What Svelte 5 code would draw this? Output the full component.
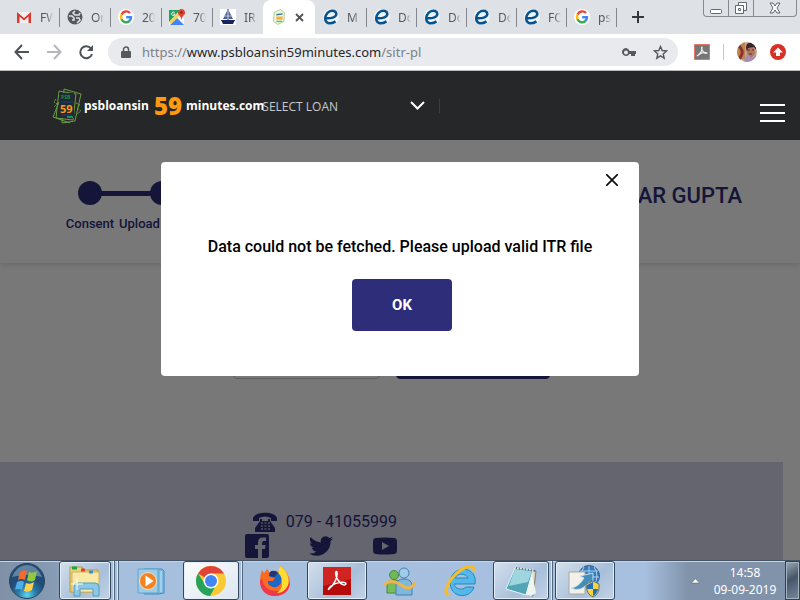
<script>
  const tabs = [
    { icon: 'gmail', title: 'FW' },
    { icon: 'globe', title: 'Or' },
    { icon: 'google', title: '20' },
    { icon: 'maps', title: '70' },
    { icon: 'ship', title: 'IRI' },
    { icon: 'psb', title: '', active: true },
    { icon: 'e', title: 'M' },
    { icon: 'e', title: 'Do' },
    { icon: 'e', title: 'Do' },
    { icon: 'e', title: 'Do' },
    { icon: 'e', title: 'FO' },
    { icon: 'google', title: 'ps' }
  ];
  const tasks = [
    { icon: 'explorer', name: 'Explorer', open: true, stack: 2 },
    { icon: 'media', name: 'Media Player' },
    { icon: 'chrome', name: 'Chrome', open: true, stack: 1, lit: true },
    { icon: 'firefox', name: 'Firefox' },
    { icon: 'acrobat', name: 'Acrobat', open: true },
    { icon: 'messenger', name: 'Messenger' },
    { icon: 'ie', name: 'Internet Explorer' },
    { icon: 'notepad', name: 'Notepad', open: true, stack: 1 },
    { icon: 'network', name: 'Network', open: true }
  ];
  let address = $state('https://www.psbloansin59minutes.com/sitr-pl');
</script>

{#snippet psbLogo()}
  <g fill="none" stroke="#6b9f43" stroke-width="1">
    <path d="M7 3l17 3-3 26-17-2z" />
    <path d="M12 1l17 5-6 27-13 2z" />
    <path d="M1 29l6-15M1 29l17 6" />
    <path d="M24 15l4 2-3 3 4 3-4 3M4 11l-2 3 3 2-3 3" stroke-dasharray="2 1" />
  </g>
  <path d="M7 5h15v25H7z" fill="#202a35" />
  <path d="M9 14h12M9 27h11" stroke="#27377b" />
  <path d="M15 29h6" stroke="#179653" stroke-width="2" />
{/snippet}

{#snippet favicon(name)}
  <svg width="16" height="16" viewBox="0 0 16 16" aria-hidden="true">
    {#if name === 'gmail'}
      <path d="M1 3h14v11H1z" fill="#f1f1f1" />
      <path d="M1 14V3l7 6 7-6v11h-2.500V7.500L8 11.500 3.500 7.500V14z" fill="#d9382c" />
    {:else if name === 'globe'}
      <circle cx="8" cy="8" r="7.500" fill="#55595e" />
      <path d="M2 7h3l2 2v2H5M8 2L6 4l2 2h4l1-2M9 9h3l1 2-3 3" fill="none" stroke="#dee1e6" stroke-width="1.600" />
    {:else if name === 'google'}
      <circle cx="8" cy="8" r="8" fill="#fff" />
      <g fill="none" stroke-width="2.400">
        <path d="M12 4A5 5 0 0 0 3.600 5.700" stroke="#ea4335" />
        <path d="M3.600 5.500a5 5 0 0 0 0 5" stroke="#fbbc05" />
        <path d="M3.500 10.300a5 5 0 0 0 8 1.700" stroke="#34a853" />
        <path d="M11.300 12A5 5 0 0 0 13 8.200H8.200" stroke="#4285f4" />
      </g>
    {:else if name === 'maps'}
      <path d="M0 1h15v15H0z" fill="#f5f5f5" />
      <path d="M0 1h11L0 13z" fill="#1ba45b" />
      <path d="M1 16l7-7 7 7z" fill="#4285f4" />
      <path d="M0 13L11 2l2 2L2 15z" fill="#fbd247" />
      <path d="M12.500 0a3.500 3.500 0 0 0-3.500 4c0 2 3 3 3.500 7 .5-4 3.500-5 3.500-7a3.500 3.500 0 0 0-3.500-4z" fill="#e04637" />
      <circle cx="12.500" cy="3.500" r="1.200" fill="#8d211c" />
      <path d="M5.500 3.500A1.700 1.700 0 1 0 6 5H4.500" fill="none" stroke="#fff" />
    {:else if name === 'ship'}
      <path d="M0 0h16v16H0z" fill="#fff" />
      <path d="M8 0v11" stroke="#253980" />
      <path d="M7 2L3 10h4zM9 2l4 8H9z" fill="#4b5f96" />
      <path d="M1 11h14l-2 4H3z" fill="#19235d" />
      <path d="M4 7h8" stroke="#b9c4da" />
    {:else if name === 'psb'}
      <svg viewBox="0 0 30 36" width="16" height="16">
        <path d="M4 8L18 1l9 7-1 20-14 7-9-7z" fill="#edf7df" stroke="#a6cc86" stroke-width="2" />
        <path d="M9 13l14-2" stroke="#3874aa" stroke-width="3" /><path d="M9 28h13" stroke="#53b68a" stroke-width="3" />
        <path d="M9 17h14v7H9z" fill="#f9ae35" />
      </svg>
    {:else}
      <circle cx="8" cy="8" r="8" fill="#eef4f8" />
      <path d="M3 9.300C9 9.600 13.600 7.900 13.300 4.700 13 2 9.800 1 7 2.200 3 3.800 1.200 8.800 2.900 12.200c1.600 3 6 2.700 9.600.2" fill="none" stroke="#07538d" stroke-width="2.500" />
    {/if}
  </svg>
{/snippet}

{#snippet taskIcon(name)}
  <svg width="34" height="34" viewBox="0 0 34 34" aria-hidden="true">
    {#if name === 'explorer'}
      <path d="M2 3h12l2 3h14v22H2z" fill="#eed27a" stroke="#b99845" />
      <path d="M4 8h27v20H4z" fill="#f9e9a7" stroke="#ceb35c" />
      <path d="M4 4h5" stroke="#11a845" stroke-width="3" /><path d="M13 6h4" stroke="#d84333" stroke-width="3" /><path d="M21 8h4" stroke="#308edc" stroke-width="3" />
      <path d="M6 32V23q0-4 4-4h17q4 0 4 4v9h-6v-7H12v7z" fill="#8bc8e5" stroke="#4f9dc7" />
      <path d="M9 14v12M3 20h12" stroke="#fff" />
    {:else if name === 'media'}
      <path d="M10 5h18l2 2v22l-5 1H10z" fill="#7bbbe0" stroke="#3f8ebd" />
      <path d="M4 5h20v24H4z" fill="#9ccce6" stroke="#5ea4cc" /><path d="M27 7v21" stroke="#c9e6f5" />
      <circle cx="14" cy="17" r="8.500" fill="#f58220" stroke="#f8dfc5" /><path d="M11.500 11.500v11l8-5.500z" fill="#fff" />
    {:else if name === 'chrome'}
      <circle cx="17" cy="17" r="15" fill="#fbc934" />
      <path d="M17 17L4 9.500A15 15 0 0 1 30 9.500H17z" fill="#df4437" />
      <path d="M4 9.500A15 15 0 0 0 16 32l6.500-11.500L17 17l-6 3z" fill="#26a25a" />
      <circle cx="17" cy="17" r="7.500" fill="#fff" /><circle cx="17" cy="17" r="6" fill="#4285f4" />
    {:else if name === 'firefox'}
      <path d="M4 6l2 3 3-4 3 4q5-4 9-1l1-6q9 6 10 16c0 9-7 14-15 14C7 32 2 25 2 17q0-6 2-11z" fill="#fb6b23" />
      <path d="M2 17c0 9 6 15 15 15 8 0 15-5 15-14-3 6-7 9-13 9C9 27 5 22 4 14z" fill="#f0384b" />
      <path d="M22 2c7 5 10 12 8 19-2 5-6 8-11 8 6-5 6-10 3-15-2-4-2-8 0-12z" fill="#ffdc30" />
      <path d="M11 9q5-4 9 0 5 4 3 10-3 5-8 4-6-2-5-6h5l2-3-5-1z" fill="#1d68c7" />
      <path d="M12 8q4-3 8 1l-4 4-5-1z" fill="#25366f" />
    {:else if name === 'acrobat'}
      <path d="M3 3h28v28H3z" fill="#b50c0b" /><path d="M3 3h28v12L3 22z" fill="#cf2421" />
      <path d="M9 25c4-3 9-11 8-17-2-2-2 4 1 8 3 5 7 6 8 4 0-3-10-2-15 2-3 3-3 4-2 3z" fill="none" stroke="#fff" stroke-width="1.500" />
    {:else if name === 'messenger'}
      <circle cx="12" cy="11" r="4.500" fill="#70b957" stroke="#45893a" /><path d="M5 29V22q0-6 7-6t7 6v7z" fill="#78bd5c" stroke="#45893a" />
      <circle cx="22" cy="9" r="5" fill="#a1cce7" stroke="#4380ad" /><path d="M14 31V22q0-7 8-7t8 7v9z" fill="#80b7dc" stroke="#4380ad" />
      <path d="M2 21q7-7 17 0t14-3" fill="none" stroke="#f1b64b" stroke-width="3" />
    {:else if name === 'ie'}
      <path d="M10 20h21C33 9 24 3 15 6 5 9 3 24 12 30c8 4 16 0 18-7h-8c-4 4-11 2-12-3zm1-6c2-5 11-5 13 0z" fill="#54b8eb" stroke="#2288bd" fill-rule="evenodd" />
      <path d="M6 30C-2 32 3 19 11 11 20 2 32-1 30 8" fill="none" stroke="#f7bd27" stroke-width="3" />
    {:else if name === 'notepad'}
      <path d="M12 4l20 3-3 25-5-1z" fill="#dad8cb" stroke="#837b65" />
      <path d="M11 4l18 2-7 25-20-6z" fill="#51a5b5" stroke="#e8f5f8" /><path d="M11 5l17 2-4 11L5 22z" fill="#9ed5df" />
      <path d="M22 31l6-22 4 20-5 3z" fill="#f0f4ee" /><path d="M12 4l19 3" stroke="#666" stroke-width="2" stroke-dasharray="1 2" />
    {:else}
      <circle cx="21" cy="12" r="10.500" fill="#3978b9" stroke="#315d95" />
      <path d="M21 2v20M12 7h18M11 13h20M16 3q-6 9 0 18M26 3q6 9 0 18" fill="none" stroke="#a7d5f2" />
      <path d="M1 8h16v22H1z" fill="#f2f0e8" stroke="#aaa89e" /><path d="M3 24q8-1 13-10l-4-2 13-3v12l-4-3Q13 29 3 24z" fill="#458ebc" stroke="#c3e1ef" />
      <path d="M18 20l7-3 6 3q1 10-6 13-7-3-7-13z" fill="#f7d33c" stroke="#54738c" /><path d="M19 21l6-3v7h-6zM25 25h5q-1 5-5 7z" fill="#246fbc" />
    {/if}
  </svg>
{/snippet}

<div class="screen">
  <header class="browser">
    <div class="tabstrip">
      {#each tabs as tab}
        <div class="tab" class:active={tab.active}>
          {@render favicon(tab.icon)}
          {#if tab.active}
            <button class="tab-close" aria-label="Close tab"><svg width="9" height="9" viewBox="0 0 9 9"><path d="M1 1l7 7M8 1L1 8" stroke="#505357" stroke-width="1.800" /></svg></button>
          {:else}
            <span>{tab.title}</span>
          {/if}
        </div>
      {/each}
      <button class="new-tab" aria-label="New tab"><svg width="12" height="12" viewBox="0 0 12 12"><path d="M6 0v12M0 6h12" stroke="#34373b" stroke-width="2" /></svg></button>
      <div class="window-buttons">
        <button aria-label="Minimize"><svg width="14" height="14" viewBox="0 0 14 14"><rect x="1.500" y="8.500" width="11" height="4" rx="1" fill="#fff" stroke="#606870" /></svg></button>
        <button aria-label="Restore"><svg width="14" height="14" viewBox="0 0 14 14"><path d="M4.500 1.500h8v8h-8z" fill="#fff" stroke="#606870" /><path d="M1.500 4.500h8v8h-8zM4.500 7.500h2v2h-2z" fill="#fff" stroke="#606870" /></svg></button>
        <button aria-label="Close"><svg width="12" height="12" viewBox="0 0 12 12"><path d="M1 1h3l2 3 2-3h3L8 6l3 5H8L6 8l-2 3H1l3-5z" fill="#fff" stroke="#606870" /></svg></button>
      </div>
    </div>
    <div class="toolbar">
      <button aria-label="Back"><svg width="16" height="16" viewBox="0 0 16 16"><path d="M15 8H2M8 1L1.500 8 8 15" fill="none" stroke="#4e5257" stroke-width="2" /></svg></button>
      <button aria-label="Forward"><svg width="16" height="16" viewBox="0 0 16 16"><path d="M1 8h13M8 1l6.500 7L8 15" fill="none" stroke="#b5b7ba" stroke-width="2" /></svg></button>
      <button aria-label="Reload"><svg width="16" height="16" viewBox="0 0 16 16"><path d="M13 4.500A6 6 0 1 0 14 10" fill="none" stroke="#4e5257" stroke-width="2" /><path d="M15 1v6H9z" fill="#4e5257" /></svg></button>
      <div class="omnibox">
        <svg width="10" height="13" viewBox="0 0 10 13" aria-hidden="true"><path d="M1 5h8q1 0 1 1v5q0 1-1 1H1q-1 0-1-1V6q0-1 1-1z" fill="#55595e" /><path d="M2.500 5V3.500a2.500 2.500 0 0 1 5 0V5" fill="none" stroke="#55595e" stroke-width="1.500" /></svg>
        <div class="url">
          <input aria-label="Address" bind:value={address} />
          <div class="url-text" aria-hidden="true">https://<b>www.psbloansin59minutes.com</b>/sitr-pl</div>
        </div>
        <svg width="14" height="9" viewBox="0 0 14 9" aria-hidden="true"><path d="M4 0a4 4 0 1 0 3.500 6H9v2h4V6h1V3H7.500A4 4 0 0 0 4 0zm0 2.500a2 2 0 1 1 0 4 2 2 0 0 1 0-4z" fill="#55595e" fill-rule="evenodd" /></svg>
        <button class="star" aria-label="Bookmark"><svg width="15" height="15" viewBox="0 0 15 15"><path d="M7.500 1.500l1.700 4 4.300.4-3.300 3 1 4.300-3.700-2.300-3.700 2.300 1-4.300-3.300-3 4.300-.4z" fill="none" stroke="#55595e" stroke-width="1.400" /></svg></button>
      </div>
      <div class="extensions">
        <svg width="16" height="16" viewBox="0 0 16 16" aria-hidden="true"><path d="M.5.5h15v15H.5z" fill="#777" stroke="#dd7766" /><path d="M3 12c4-2 5-6 5-9-2 0 2 8 5 6 0-1-7-1-10 3z" fill="none" stroke="#eee" stroke-width="1.200" /></svg>
        <i></i>
        <svg class="avatar" width="20" height="20" viewBox="0 0 20 20" role="img" aria-label="Profile"><defs><clipPath id="face"><circle cx="10" cy="10" r="10" /></clipPath></defs><g clip-path="url(#face)"><path d="M0 0h20v20H0z" fill="#c9a191" /><path d="M0 0h8v17H0z" fill="#bd8548" /><path d="M2 4q4 4 3 8l-3 6" fill="none" stroke="#8b3036" stroke-width="3" /><path d="M10 3h7l1 9-4 4-4-4z" fill="#b17661" /><path d="M9 6q0-6 6-5 5 1 4 7l-2-3-6 1-1 4z" fill="#3b2428" /><path d="M6 20l4-8 4 4 5-3 1 7z" fill="#a58db7" /><path d="M11 8h2M15 8h2M12 12h3" stroke="#533138" /></g></svg>
        <svg width="16" height="16" viewBox="0 0 16 16" role="img" aria-label="Update"><circle cx="8" cy="8" r="8" fill="#d93025" /><path d="M8 3.500l5 5h-3V12H6V8.500H3z" fill="#fff" /></svg>
      </div>
    </div>
  </header>

  <header class="site-header">
    <a class="brand" href="#home">
      <svg width="30" height="36" viewBox="0 0 30 36" aria-hidden="true">{@render psbLogo()}<text x="9" y="11" fill="#14914b" font-size="5" font-weight="700">PSB</text><text x="8" y="25" fill="#ff9910" font-size="11" font-weight="700">59</text></svg>
      <span>psbloansin</span><strong>59</strong><span>minutes.com</span>
    </a>
    <button class="loan">SELECT LOAN <svg width="15" height="10" viewBox="0 0 15 10" aria-hidden="true"><path d="M1 1l6.500 6.500L14 1" fill="none" stroke="#fff" stroke-width="2" /></svg></button>
    <button class="menu" aria-label="Menu"><i></i><i></i><i></i></button>
  </header>

  <main>
    <section class="progress">
      <ol>
        <li><i></i><span>Consent</span></li>
        <li><i></i><span>Upload</span></li>
      </ol>
      <h1>AR GUPTA</h1>
    </section>
    <section class="actions">
      <div class="secondary"></div>
      <div class="primary"></div>
    </section>
    <footer>
      <div class="contact">
        <a class="phone" href="tel:07941055999"><svg width="24" height="20" viewBox="0 0 24 20" aria-hidden="true"><path d="M0 9V6C2-1 22-1 24 6v3h-6V6Q12 3 6 6v3z" fill="currentColor" /><path d="M7 7h2v2h6V7h2v2l5 7v4H2v-4l5-7z" fill="currentColor" /><path d="M8 11h9M8 14h9M8 17h9" stroke="#a9a9bf" stroke-width="1.500" stroke-dasharray="2 1.500" /></svg>079 - 41055999</a>
        <div class="social">
          <a href="#facebook" aria-label="Facebook"><svg width="24" height="24" viewBox="0 0 24 24"><path d="M2 0h20q2 0 2 2v20q0 2-2 2h-5v-9h3l.5-4H17V9q0-2 2-2h2V3.500h-3q-5 0-5 5V11h-3v4h3v9H2q-2 0-2-2V2q0-2 2-2z" fill="currentColor" /></svg></a>
          <a href="#twitter" aria-label="Twitter"><svg width="24" height="24" viewBox="0 0 24 24"><path d="M24 4.600a10 10 0 0 1-2.800.8 5 5 0 0 0 2.200-2.700 10 10 0 0 1-3.100 1.200 4.900 4.900 0 0 0-8.400 4.500A14 14 0 0 1 1.700 3.100a4.900 4.900 0 0 0 1.500 6.600A5 5 0 0 1 1 9.100c0 2.300 1.700 4.300 4 4.800a5 5 0 0 1-2.200.1c.6 2 2.400 3.400 4.600 3.400A10 10 0 0 1 .1 19.500 14 14 0 0 0 7.600 21.700c9.100 0 14.300-7.700 14-14.600A10 10 0 0 0 24 4.600z" fill="currentColor" /></svg></a>
          <a href="#youtube" aria-label="YouTube"><svg width="24" height="24" viewBox="0 0 24 24"><path d="M3 4q9-1 18 0 3 0 3 4v8q0 4-3 4-9 1-18 0-3 0-3-4V8q0-4 3-4zm6 4v8l7-4z" fill="currentColor" fill-rule="evenodd" /></svg></a>
        </div>
      </div>
    </footer>
    <div class="overlay">
      <div class="modal" role="dialog" aria-modal="true" aria-labelledby="message">
        <button class="close" aria-label="Close"><svg width="12" height="12" viewBox="0 0 12 12"><path d="M0 0l12 12M12 0L0 12" stroke="#111" stroke-width="1.800" /></svg></button>
        <p id="message">Data could not be fetched. Please upload valid ITR file</p>
        <button class="ok">OK</button>
      </div>
    </div>
  </main>

  <nav class="taskbar" aria-label="Taskbar">
    <button class="start" aria-label="Start"><svg width="38" height="38" viewBox="0 0 38 38"><defs><radialGradient id="orb" cy=".9"><stop stop-color="#61d7ee" /><stop offset=".5" stop-color="#287da9" /><stop offset="1" stop-color="#214c75" /></radialGradient></defs><circle cx="19" cy="19" r="17.500" fill="url(#orb)" stroke="#29445f" /><path d="M4 15q5-12 15-12t15 12q-15-4-30 0z" fill="#8da9bd" opacity=".6" /><path d="M12 10q4-3 7-1l-2 9q-4-2-7 0z" fill="#f26a2e" /><path d="M21 10q4 2 8-1l-2 9q-4 3-8 0z" fill="#91c93f" /><path d="M9 20q4-2 7 0l-2 8q-4-2-7 0z" fill="#52aee9" /><path d="M18 21q4 2 8-1l-2 8q-4 3-8 1z" fill="#ffd24b" /></svg></button>
    <div class="tasks">
      {#each tasks as task}
        <div class="slot">
          <button class="task" class:open={task.open} class:lit={task.lit} aria-label={task.name}>{@render taskIcon(task.icon)}</button>
          {#each Array(task.stack ?? 0) as _}<i></i>{/each}
        </div>
      {/each}
    </div>
    <div class="tray">
      <button aria-label="Show hidden icons"><svg width="9" height="6" viewBox="0 0 9 6"><path d="M.5 5L4.500.7 8.500 5z" fill="#fff" stroke="#4b5a6b" stroke-width=".5" /></svg></button>
      <time><span>14:58</span><span>09-09-2019</span></time>
      <button class="desktop" aria-label="Show desktop"></button>
    </div>
  </nav>
</div>

<style>
  :global(body) { margin: 0; }
  * { box-sizing: border-box; }
  button { padding: 0; border: 0; background: none; font: inherit; color: inherit; display: flex; align-items: center; justify-content: center; }
  a { color: inherit; text-decoration: none; }
  svg { display: block; flex: none; }
  .screen { min-height: 100vh; display: flex; flex-direction: column; overflow: hidden; font-family: Roboto, "Liberation Sans", sans-serif; }
  .browser { background: #fff; border-bottom: 1px solid #b8b9bc; font-family: "Noto Sans", "Open Sans", sans-serif; }
  .tabstrip { height: 34px; background: #dee1e6; display: flex; padding-left: 8px; }
  .tab { width: 51px; display: flex; align-items: center; gap: 8px; padding-left: 8px; position: relative; font-size: 12px; color: #55585d; }
  .tab:not(.active)::after { content: ""; position: absolute; right: -1px; top: 8px; width: 1px; height: 19px; background: #85888e; }
  .tab:nth-child(5)::after { display: none; }
  .tab span { width: 13px; overflow: hidden; white-space: nowrap; mask-image: linear-gradient(90deg, #000 50%, transparent); }
  .tab.active { width: 52px; background: #fff; border-radius: 8px 8px 0 0; }
  .active ~ .tab { width: 50px; padding-left: 8px; }
  .tab.active + .tab { width: 51px; }
  .new-tab { width: 44px; }
  .window-buttons { margin-left: auto; margin-right: 3px; display: flex; height: 17px; border: 1px solid #858b93; border-top: 0; border-radius: 0 0 4px 4px; }
  .window-buttons button { width: 25px; border-right: 1px solid #858b93; }
  .window-buttons button:last-child { width: 42px; border: 0; }
  .toolbar { height: 36px; display: flex; align-items: center; gap: 16px; padding: 0 14px; }
  .omnibox { flex: 1; height: 28px; margin-left: -2px; border-radius: 14px; background: #e9eaee; display: flex; align-items: center; padding: 0 10px 0 13px; gap: 11px; }
  .url { flex: 1; position: relative; font-size: 13px; line-height: 20px; }
  .url input { width: 100%; padding: 0; border: 0; outline: 0; background: none; color: transparent; font: inherit; display: block; }
  .url-text { position: absolute; inset: 0; color: #7d8086; white-space: nowrap; pointer-events: none; }
  .url-text b { font-weight: 400; color: #26282b; }
  .star { margin-left: 6px; }
  .extensions { display: flex; align-items: center; gap: 13px; }
  .extensions i { width: 1px; height: 16px; background: #c4c6c9; }

  .site-header { height: 69px; background: #252729; display: flex; padding: 0 15px 0 52px; color: #fff; font-family: "Open Sans", sans-serif; }
  .brand { display: flex; align-items: center; height: 69px; font-size: 12px; font-weight: 700; white-space: nowrap; }
  .brand svg { margin-right: 2px; }
  .brand strong { font-size: 24px; line-height: 28px; color: #ff9910; margin: 0 4px 0 5px; }
  .loan { width: 178px; height: 14px; margin: 28px 0 0 -2px; padding-right: 14px; justify-content: space-between; border-right: 1px solid #3c3e40; font-size: 12px; color: #c8c9ca; }
  .menu { flex-direction: column; gap: 6px; margin: 32px 0 0 auto; height: 20px; }
  .menu i { width: 25px; height: 2px; background: #fff; }

  main { flex: 1; display: flex; flex-direction: column; position: relative; background: #fff; color: #2d2d79; }
  .progress { display: flex; justify-content: space-between; height: 123px; padding: 41px 58px 0 54px; box-shadow: 0 2px 5px #0002; }
  ol { display: flex; margin: 0; padding: 0; list-style: none; }
  li { width: 72px; display: flex; flex-direction: column; align-items: center; gap: 10px; position: relative; font-size: 13px; line-height: 18px; font-weight: 500; }
  li i { width: 24px; height: 24px; border-radius: 50%; background: #2d2d79; }
  li + li::before { content: ""; position: absolute; right: 36px; top: 10px; width: 72px; height: 5px; background: #2d2d79; }
  li + li span { width: 86px; }
  h1 { margin: 0; padding-top: 2px; font-size: 22px; line-height: 26px; font-weight: 500; }
  .actions { height: 199px; padding: 68px 17px 0 0; display: flex; justify-content: center; align-items: flex-start; gap: 16px; }
  .actions div { width: 147px; height: 48px; border-radius: 4px; border: 1px solid #c8c8c8; }
  .actions .primary { width: 154px; background: #2d2d79; border-color: #2d2d79; }
  footer { flex: 1; margin-right: 17px; padding: 49px 141px 0 0; background: #d7d7ec; }
  .contact { width: 152px; margin: 0 auto; }
  .phone { display: flex; align-items: center; justify-content: flex-end; gap: 9px; height: 21px; font-size: 16px; white-space: nowrap; }
  .social { display: flex; justify-content: space-between; padding-top: 2px; }
  .overlay { position: absolute; inset: 0; padding-top: 22px; background: rgba(0, 0, 0, .53); display: flex; justify-content: center; align-items: flex-start; }
  .modal { width: 478px; min-height: 214px; position: relative; background: #fff; border-radius: 4px; padding: 75px 16px 45px; display: flex; flex-direction: column; align-items: center; gap: 22px; }
  .close { position: absolute; right: 21px; top: 12px; }
  p { margin: 0; color: #000; font-size: 16px; line-height: 20px; font-weight: 500; white-space: nowrap; }
  .ok { width: 100px; height: 52px; margin-left: 4px; border-radius: 4px; background: #2d2d79; color: #fff; font-size: 15px; font-weight: 700; }

  .taskbar { height: 40px; display: flex; border-top: 1px solid #465465; box-shadow: inset 0 1px #c5d5e7; background: linear-gradient(90deg, #7f90a6 0, #879bb5 54px, #a6bfdd 110px, #a7c0df calc(100% - 155px), #8193aa calc(100% - 112px)); font-family: "Noto Sans", sans-serif; }
  .start { width: 59px; padding-right: 5px; }
  .tasks { display: flex; gap: 2px; }
  .slot { display: flex; width: 60px; }
  .task { flex: 1; border-radius: 3px; }
  .task.open { border: 1px solid #34465b; box-shadow: inset 0 0 0 1px #e5eef7; background: linear-gradient(135deg, #d4e0ed, #a8bfda 60%, #c3d3e7); }
  .task.lit { background: linear-gradient(145deg, #fafcfd, #dce6f0); }
  .slot i { width: 4px; border-right: 1px solid #53677e; box-shadow: inset -1px 0 #dce8f3; }
  .tray { flex: 1; display: flex; align-items: center; justify-content: flex-end; color: #fff; }
  time { width: 80px; display: flex; flex-direction: column; align-items: center; margin-left: 5px; font-size: 12px; line-height: 17px; }
  .desktop { width: 15px; height: 39px; border: 1px solid #34404e; box-shadow: inset 0 0 0 1px #a5b2bf; background: linear-gradient(150deg, #9daab7, #465667 45%, #7789a0); }
</style>
